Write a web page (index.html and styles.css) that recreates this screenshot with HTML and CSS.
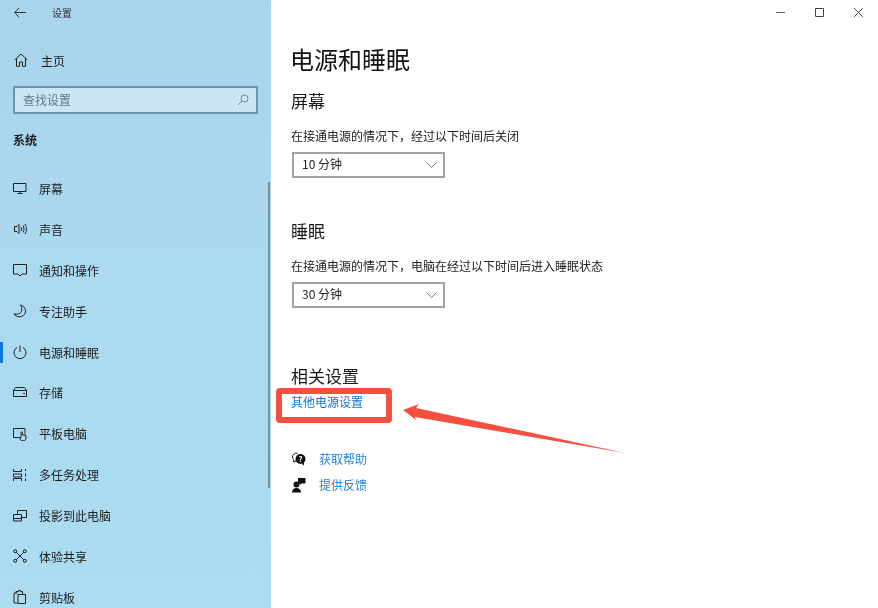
FILE: index.html
```html
<!DOCTYPE html>
<html lang="zh">
<head>
<meta charset="utf-8">
<title>设置</title>
<link rel="stylesheet" href="styles.css">
</head>
<body>
<div class="window">
  <aside class="sidebar">
    <div class="titlebar">
      <svg class="back" width="12" height="11" viewBox="0 0 12 11"><path d="M5 .8.800 5.500 5 10.200M.8 5.500H12" fill="none" stroke="#333" stroke-width="1"/></svg>
      <span class="app-title">设置</span>
    </div>
    <div class="home">
      <svg class="icon" width="14" height="14" viewBox="0 0 14 14"><path d="M.8 6.800 7 1l6.200 5.800M2.500 5.500v7.800h3V9h3v4.300h3V5.500" fill="none" stroke="#222" stroke-width="1"/></svg>
      <span>主页</span>
    </div>
    <div class="search">
      <span class="search-text">查找设置</span>
      <svg width="12" height="12" viewBox="0 0 12 12"><circle cx="7.500" cy="4.500" r="3.500" fill="none" stroke="#6c8796"/><path d="M5 7 1 11" stroke="#6c8796"/></svg>
    </div>
    <div class="section">系统</div>
    <nav class="nav">
      <div class="row">
        <svg class="icon" width="14" height="14" viewBox="0 0 14 14"><path d="M.5 2.500h12.500v8H.5zM4.500 12.500h5" fill="none" stroke="#222"/><path d="M7 10.500v2" stroke="#222"/></svg>
        <span>屏幕</span>
      </div>
      <div class="row">
        <svg class="icon" width="14" height="14" viewBox="0 0 14 14"><path d="M4 4.500H1.500v5H4l2 2v-9zM8 5c.7 1.300.7 2.700 0 4M10 3.500c1.300 2.300 1.300 4.700 0 7M12 2c2 3.300 2 6.700 0 10" fill="none" stroke="#222"/></svg>
        <span>声音</span>
      </div>
      <div class="row">
        <svg class="icon" width="14" height="14" viewBox="0 0 14 14"><path d="M.5 1.500h13v9.500H9l-2 2-2-2H.5z" fill="none" stroke="#222"/></svg>
        <span>通知和操作</span>
      </div>
      <div class="row">
        <svg class="icon" width="14" height="14" viewBox="0 0 14 14"><path d="M7.500 1c3.500 1 5.500 4 5 7-.5 3-3.500 5-6.500 4.800-2.300-.2-4-1.300-5-3 3 1 6 .3 7.300-2 .9-2 .7-4.500-.8-6.800z" fill="none" stroke="#222"/></svg>
        <span>专注助手</span>
      </div>
      <div class="row active">
        <svg class="icon" width="14" height="14" viewBox="0 0 14 14"><path d="M4 2.500a6 6 0 1 0 6 0M7 .5v6.500" fill="none" stroke="#222"/></svg>
        <span>电源和睡眠</span>
      </div>
      <div class="row">
        <svg class="icon" width="14" height="14" viewBox="0 0 14 14"><path d="M.5 4.500h13v6H.5zM.5 4.500 2.500 1.500h9l2 3M10 7.500h2" fill="none" stroke="#222"/></svg>
        <span>存储</span>
      </div>
      <div class="row">
        <svg class="icon" width="14" height="14" viewBox="0 0 14 14"><path d="M7 10.500H.5v-9h11.500v6" fill="none" stroke="#222"/><path d="M8 5.500v5l-1 .5c0 2 1.200 2.800 3 2.800s3-1 3-2.800V8.500L9.500 8V5.500a.7.700 0 0 0-1.500 0z" fill="none" stroke="#222"/></svg>
        <span>平板电脑</span>
      </div>
      <div class="row">
        <svg class="icon" width="14" height="14" viewBox="0 0 14 14"><path d="M.5 1v2.500h8V1M.5 13v-2.500h8V13M.5 6h8v3h-8zM12.500 1v2M12.500 5.500v3M12.500 10.500V13" fill="none" stroke="#222"/></svg>
        <span>多任务处理</span>
      </div>
      <div class="row">
        <svg class="icon" width="14" height="14" viewBox="0 0 14 14"><path d="M4.500 5V1.500h9v7H9M.5 5.500h8v6.500h-8zM.5 9.500h8" fill="none" stroke="#222"/></svg>
        <span>投影到此电脑</span>
      </div>
      <div class="row">
        <svg class="icon" width="14" height="14" viewBox="0 0 14 14"><path d="M3 3l8 8M11 3l-8 8" stroke="#222"/><circle cx="2.200" cy="2.200" r="1.500" fill="#abd9ef" stroke="#222"/><circle cx="11.800" cy="2.200" r="1.500" fill="#abd9ef" stroke="#222"/><circle cx="2.200" cy="11.800" r="1.500" fill="#abd9ef" stroke="#222"/><circle cx="11.800" cy="11.800" r="1.500" fill="#abd9ef" stroke="#222"/></svg>
        <span>体验共享</span>
      </div>
      <div class="row">
        <svg class="icon" width="14" height="14" viewBox="0 0 14 14"><path d="M4.500 3H1v10h3.500M5 4.500h7.500V13.500H5zM3 3V1.500h2.500V.5h2v1H9.500V4" fill="none" stroke="#222"/></svg>
        <span>剪贴板</span>
      </div>
    </nav>
    <div class="scrollbar"></div>
  </aside>
  <main class="main">
    <div class="controls">
      <svg width="9" height="9" viewBox="0 0 9 9"><path d="M0 4.500h9" stroke="#666"/></svg>
      <svg width="9" height="9" viewBox="0 0 9 9"><path d="M.5.500h8v8h-8z" fill="none" stroke="#444"/></svg>
      <svg width="9" height="9" viewBox="0 0 9 9"><path d="M.2.200l8.600 8.600M8.800.2.200 8.800" stroke="#444"/></svg>
    </div>
    <h1>电源和睡眠</h1>
    <section class="group">
      <h2>屏幕</h2>
      <p class="label">在接通电源的情况下，经过以下时间后关闭</p>
      <div class="select">
        <span class="select-text">10 分钟</span>
        <svg width="11" height="6" viewBox="0 0 11 6"><path d="M.4.400 5.500 5.400l5.100-5" fill="none" stroke="#777"/></svg>
      </div>
    </section>
    <section class="group sleep">
      <h2>睡眠</h2>
      <p class="label">在接通电源的情况下，电脑在经过以下时间后进入睡眠状态</p>
      <div class="select">
        <span class="select-text">30 分钟</span>
        <svg width="11" height="6" viewBox="0 0 11 6"><path d="M.4.400 5.500 5.400l5.100-5" fill="none" stroke="#777"/></svg>
      </div>
    </section>
    <section class="related">
      <h2>相关设置</h2>
      <a class="link">其他电源设置</a>
    </section>
    <div class="help">
      <div class="help-row">
        <svg width="14" height="14" viewBox="0 0 14 14"><path d="M5.500 1C2.500 1 .5 2.700.5 5c0 1.200.6 2.200 1.500 3L1.500 10l2.500-1" fill="none" stroke="#111"/><circle cx="8.500" cy="7" r="5" fill="#111"/><path d="M10 12l2 1.500V10z" fill="#111"/><text x="8.500" y="9.500" class="q">?</text></svg>
        <a class="link">获取帮助</a>
      </div>
      <div class="help-row">
        <svg width="14" height="16" viewBox="0 0 14 16"><circle cx="4.500" cy="7.500" r="3" fill="#111"/><path d="M0 15.500c0-3 2-4.500 4.500-4.500S9 12.500 9 15.500z" fill="#111"/><path d="M6 1h7.500v5.500H9.500L8 8V6.500H6z" fill="#111"/></svg>
        <a class="link">提供反馈</a>
      </div>
    </div>
  </main>
  <div class="mark-box"></div>
  <svg class="mark-arrow" width="230" height="56" viewBox="0 0 230 56"><path d="M1 8 17 2 14 6 223 51 13 15 14 18z" fill="#f44f3f"/></svg>
</div>
</body>
</html>
```
FILE: styles.css
```css
* { box-sizing: border-box; }
html, body { margin: 0; padding: 0; background: #fff; }
body {
  font-family: "Noto Sans CJK SC", "Liberation Sans", sans-serif;
  font-size: 12px;
  color: #1c1c1c;
}
.window {
  position: relative;
  display: flex;
  width: 878px;
  height: 608px;
  overflow: hidden;
  filter: blur(0.3px);
}
.sidebar {
  position: relative;
  flex: 0 0 271px;
  background: linear-gradient(180deg, #a9d4ec 0%, #abd9ef 45%, #abdcf0 100%);
}
.titlebar {
  display: flex;
  align-items: center;
  height: 25px;
  padding-left: 14px;
}
.app-title { margin-left: 26px; font-size: 10px; color: #333; }
.home {
  display: flex;
  align-items: center;
  gap: 13px;
  height: 24px;
  margin-top: 23px;
  padding-left: 14px;
}
.search {
  display: flex;
  align-items: center;
  justify-content: space-between;
  width: 245px;
  height: 28px;
  margin: 14px 0 0 13px;
  padding: 0 7px 0 8px;
  border: 2px solid #6f95a8;
  background: #cbe5f3;
  color: #5f7885;
}
.search-text { margin-top: -2px; }
.section {
  margin: 16px 0 0 13px;
  height: 20px;
  line-height: 20px;
  font-weight: 700;
}
.nav { margin-top: 18px; }
.row {
  position: relative;
  display: flex;
  align-items: center;
  gap: 12px;
  height: 40.9px;
  padding-left: 13px;
}
.row.active::before {
  content: "";
  position: absolute;
  left: 0;
  top: 10px;
  width: 3px;
  height: 21px;
  background: #0a78d7;
}
.scrollbar {
  position: absolute;
  top: 182px;
  left: 268px;
  width: 2px;
  height: 306px;
  background: #7d8e98;
}
.main { flex: 1; padding-left: 20px; }
.controls {
  display: flex;
  justify-content: flex-end;
  gap: 30px;
  height: 8px;
  padding: 8px 15px 0 0;
  margin-left: -20px;
}
.controls svg { flex: none; }
h1 {
  margin: 33px 0 0 -1px;
  height: 36px;
  line-height: 36px;
  font-size: 24px;
  font-weight: 400;
  color: #111;
}
h2 {
  margin: 0;
  height: 26px;
  line-height: 26px;
  font-size: 17px;
  font-weight: 400;
  color: #1a1a1a;
}
.group { margin-top: 11px; }
.group.sleep { margin-top: 40px; }
.label {
  margin: 13px 0 0;
  height: 18px;
  line-height: 18px;
  color: #222;
}
.select {
  display: flex;
  align-items: center;
  justify-content: space-between;
  width: 153px;
  height: 26px;
  margin: 7px 0 0 1px;
  padding: 0 6px 0 8px;
  border: 2px solid #a3a3a3;
  background: #fff;
  color: #222;
}
.select-text { margin-top: -3px; }
.related { margin-top: 55px; }
.link { display: block; color: #0f76cf; line-height: 18px; }
.related .link { margin-top: 4px; }
.help { margin-top: 35px; margin-left: 1px; }
.help-row {
  display: flex;
  align-items: center;
  gap: 13px;
  height: 26px;
}
.help-row svg { flex: none; }
.help-row .link { color: #2484d8; }
.q { font-size: 8px; font-weight: 700; fill: #fff; text-anchor: middle; }
.mark-box {
  position: absolute;
  left: 276px;
  top: 388px;
  width: 116px;
  height: 35px;
  border: 6px solid #f44f3f;
  border-radius: 4px;
}
.mark-arrow {
  position: absolute;
  left: 402px;
  top: 402px;
}
```
